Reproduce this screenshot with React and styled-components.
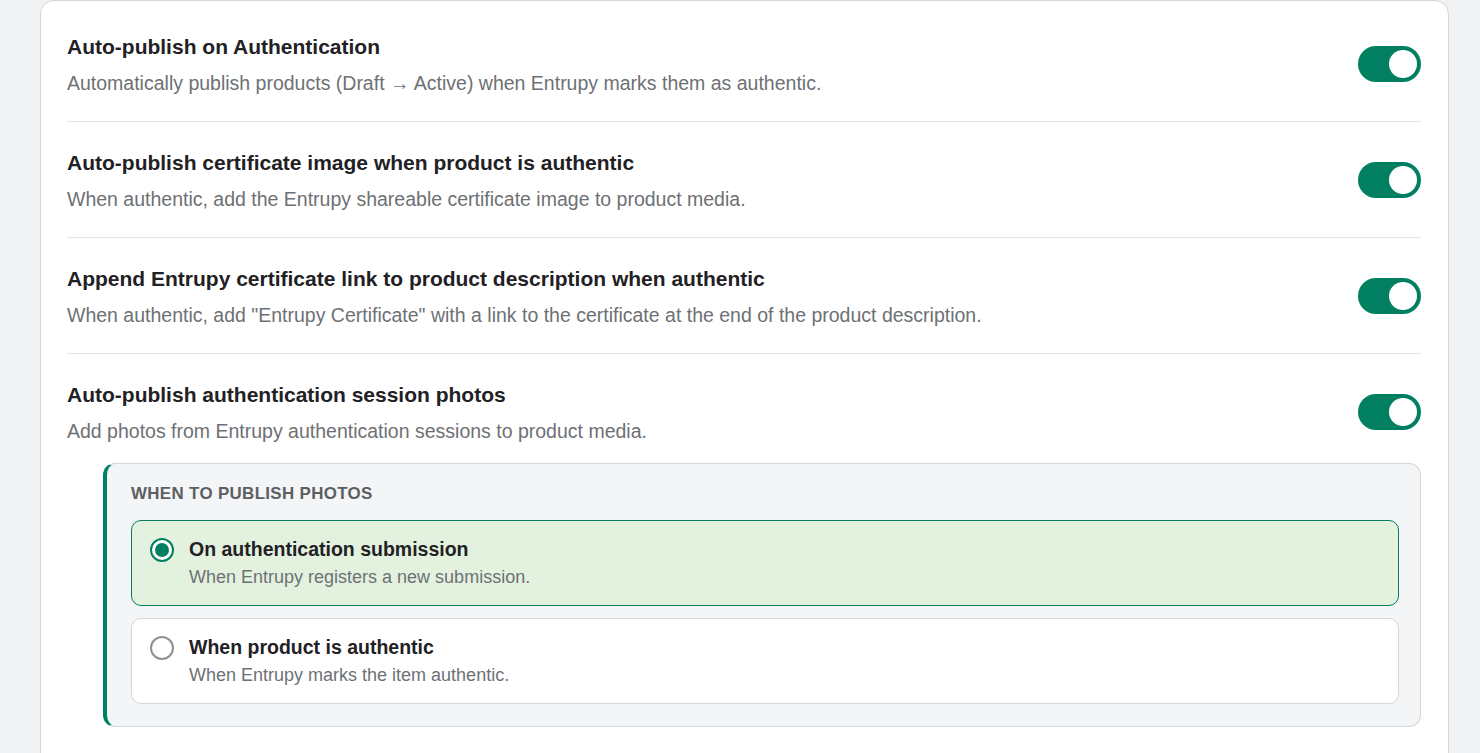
import React, { useState } from 'react';
import styled, { createGlobalStyle } from 'styled-components';

const GlobalStyle = createGlobalStyle`
  html, body {
    margin: 0;
    padding: 0;
    background: #f1f2f4;
    font-family: "Liberation Sans", Arial, sans-serif;
  }
`

const Page = styled.div`
  padding: 0 31px 0 40px;
  min-height: 753px;
  box-sizing: border-box;
`

const Card = styled.div`
  background: #ffffff;
  border: 1px solid #d2d5d9;
  border-radius: 14px;
  padding: 5px 27px 40px 26px;
  box-sizing: border-box;
`

const Row = styled.div`
  padding: 28px 0 24px;
  border-bottom: ${(props) => (props.last ? 'none' : '1px solid #e1e3e5')};
`

const RowHeader = styled.div`
  display: flex;
  align-items: center;
  justify-content: space-between;
  gap: 24px;
`

const TextBlock = styled.div`
  display: flex;
  flex-direction: column;
  gap: 9px;
`

const Title = styled.div`
  font-size: 21px;
  line-height: 26px;
  font-weight: 700;
  color: #1f2124;
`

const Desc = styled.div`
  font-size: 19.5px;
  line-height: 28px;
  color: #6d7175;
`

const Track = styled.button`
  flex: none;
  width: 63px;
  height: 36px;
  margin-bottom: 4px;
  border-radius: 18px;
  border: none;
  padding: 0 4px;
  display: flex;
  align-items: center;
  justify-content: ${(props) => (props.on ? 'flex-end' : 'flex-start')};
  background: ${(props) => (props.on ? '#008060' : '#c9cccf')};
  cursor: pointer;
`

const Knob = styled.span`
  width: 28px;
  height: 28px;
  border-radius: 50%;
  background: #ffffff;
`

const Panel = styled.div`
  margin: 18px 0 0 36px;
  background: #f4f5f7;
  border: 1px solid #d2d5d9;
  border-left: 4px solid #008060;
  border-radius: 12px;
  padding: 20px 21px 22px 24px;
  display: flex;
  flex-direction: column;
  gap: 12px;
`

const PanelLabel = styled.div`
  font-size: 16.9px;
  line-height: 20px;
  font-weight: 700;
  letter-spacing: 0.35px;
  text-transform: uppercase;
  color: #5c5f62;
  margin-bottom: 4px;
`

const Option = styled.label`
  display: flex;
  align-items: flex-start;
  gap: 15px;
  padding: 16px 18px 16px 18px;
  border-radius: 10px;
  border: 1px solid ${(props) => (props.selected ? '#008060' : '#d2d5d9')};
  background: ${(props) => (props.selected ? '#e3f1df' : '#ffffff')};
  cursor: pointer;
`

const Radio = styled.span`
  flex: none;
  width: 24px;
  height: 24px;
  margin-top: 1px;
  border-radius: 50%;
  box-sizing: border-box;
  border: 2px solid ${(props) => (props.checked ? '#008060' : '#8c9196')};
  background: #ffffff;
  display: flex;
  align-items: center;
  justify-content: center;
  &::after {
    content: '';
    width: 14px;
    height: 14px;
    border-radius: 50%;
    background: ${(props) => (props.checked ? '#008060' : 'transparent')};
  }
`

const OptionText = styled.div`
  display: flex;
  flex-direction: column;
  gap: 4px;
`

const OptionTitle = styled.div`
  font-size: 19.5px;
  line-height: 24px;
  font-weight: 700;
  color: #1f2124;
`

const OptionDesc = styled.div`
  font-size: 18px;
  line-height: 24px;
  color: #6d7175;
`

const settings = [
  {
    title: 'Auto-publish on Authentication',
    desc: 'Automatically publish products (Draft \u2192 Active) when Entrupy marks them as authentic.',
  },
  {
    title: 'Auto-publish certificate image when product is authentic',
    desc: 'When authentic, add the Entrupy shareable certificate image to product media.',
  },
  {
    title: 'Append Entrupy certificate link to product description when authentic',
    desc: 'When authentic, add "Entrupy Certificate" with a link to the certificate at the end of the product description.',
  },
  {
    title: 'Auto-publish authentication session photos',
    desc: 'Add photos from Entrupy authentication sessions to product media.',
  },
]

const options = [
  { id: 'submission', title: 'On authentication submission', desc: 'When Entrupy registers a new submission.' },
  { id: 'authentic', title: 'When product is authentic', desc: 'When Entrupy marks the item authentic.' },
]

function App() {
  const [toggles, setToggles] = useState([true, true, true, true]);
  const [when, setWhen] = useState('submission');

  function flip(i) {
    setToggles(toggles.map((t, idx) => (idx === i ? !t : t)));
  }

  return (
    <Page>
      <GlobalStyle />
      <Card>
        {settings.map((s, i) => (
          <Row key={s.title} last={i === settings.length - 1}>
            <RowHeader>
              <TextBlock>
                <Title>{s.title}</Title>
                <Desc>{s.desc}</Desc>
              </TextBlock>
              <Track on={toggles[i]} onClick={() => flip(i)} aria-pressed={toggles[i]}>
                <Knob />
              </Track>
            </RowHeader>
            {i === 3 && toggles[3] && (
              <Panel>
                <PanelLabel>When to publish photos</PanelLabel>
                {options.map((o) => (
                  <Option key={o.id} selected={when === o.id} onClick={() => setWhen(o.id)}>
                    <Radio checked={when === o.id} />
                    <OptionText>
                      <OptionTitle>{o.title}</OptionTitle>
                      <OptionDesc>{o.desc}</OptionDesc>
                    </OptionText>
                  </Option>
                ))}
              </Panel>
            )}
          </Row>
        ))}
      </Card>
    </Page>
  );
}

export default App;
